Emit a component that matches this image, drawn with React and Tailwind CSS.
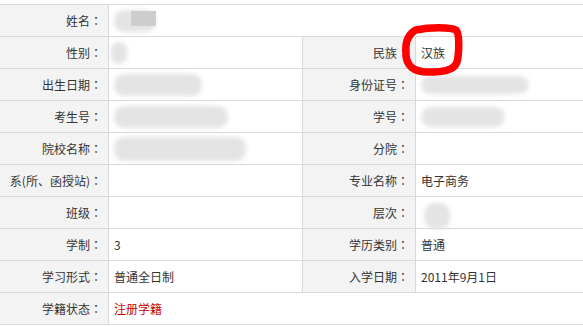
import React from 'react';

const Blob = ({ className }) => (
  <div className={`rounded-[10px] bg-[#e4e4e4] blur-[2px] ${className}`}></div>
);

// full-width colon drawn centred in its box, as in the original page font
const Label = ({ children, className = '' }) => (
  <div className={`flex items-center justify-end pr-[6px] bg-[#f3f3f3] border-r border-[#d9d9d9] shrink-0 ${className}`}>
    {children}
    <span style={{ fontFamily: '"Noto Sans CJK TC", sans-serif' }}>：</span>
  </div>
);

const Value = ({ children, className = '' }) => (
  <div className={`flex items-center pl-[5px] ${className}`}>{children}</div>
);

const rows = [
  { l: '性别', v: <Blob className="w-[16px] h-[22px] -ml-[3px]" />, rl: '民族', rv: '汉族' },
  { l: '出生日期', v: <Blob className="w-[88px] h-[22px]" />, rl: '身份证号', rv: <Blob className="w-[108px] h-[18px]" /> },
  { l: '考生号', v: <Blob className="w-[114px] h-[22px]" />, rl: '学号', rv: <Blob className="w-[84px] h-[20px]" /> },
  { l: '院校名称', v: <Blob className="w-[132px] h-[24px]" />, rl: '分院', rv: null },
  { l: '系(所、函授站)', v: null, rl: '专业名称', rv: '电子商务' },
  { l: '班级', v: null, rl: '层次', rv: <Blob className="w-[26px] h-[26px] ml-[3px] mt-[6px]" /> },
  { l: '学制', v: '3', rl: '学历类别', rv: '普通' },
  { l: '学习形式', v: '普通全日制', rl: '入学日期', rv: '2011年9月1日' },
];

export default function App() {
  return (
    <div
      className="relative w-[583px] h-[327px] overflow-hidden bg-white text-[12px] text-[#333]"
      style={{ fontFamily: '"Noto Sans CJK SC", "Noto Sans", sans-serif' }}
    >
      <div className="mt-[4px] border-t border-[#d9d9d9]">
        <div className="flex h-[32px] border-b border-[#d9d9d9]">
          <Label className="w-[109px]">姓名</Label>
          <Value className="flex-1 pl-[2px]">
            <div className="relative w-[42px] h-[22px]">
              <Blob className="absolute inset-0" />
              <div className="absolute left-[17px] top-[1px] w-[25px] h-[15px] bg-[#cdcdcd]"></div>
            </div>
          </Value>
        </div>
        {rows.map((r, i) => (
          <div key={i} className="flex h-[32px] border-b border-[#d9d9d9]">
            <Label className="w-[109px]">{r.l}</Label>
            <Value className="w-[194px] border-r border-[#d9d9d9] shrink-0">{r.v}</Value>
            <Label className="w-[113px]">{r.rl}</Label>
            <Value className="flex-1">{r.rv}</Value>
          </div>
        ))}
        <div className="flex h-[32px] border-b border-[#d9d9d9]">
          <Label className="w-[109px]">学籍状态</Label>
          <Value className="flex-1 text-[#cc0000]">注册学籍</Value>
        </div>
      </div>

      <svg
        className="absolute left-[398px] top-[24px]"
        width="68"
        height="55"
        viewBox="0 0 68 55"
        fill="none"
      >
        <path
          d="M 18 6 C 32 3, 52 3, 58 6 C 62 10, 61 30, 59 38 C 56 47, 44 48, 30 48 C 16 48, 8 42, 8 30 C 7 20, 9 12, 16 7"
          stroke="#ff0000"
          strokeWidth="7.5"
          strokeLinecap="round"
          strokeLinejoin="round"
        />
      </svg>
    </div>
  );
}
